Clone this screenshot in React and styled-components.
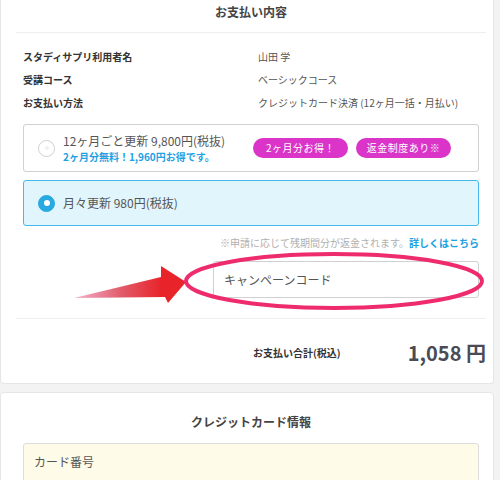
import React from 'react';
import styled, { createGlobalStyle } from 'styled-components';

const GlobalStyle = createGlobalStyle`
  html, body {
    margin: 0;
    padding: 0;
    background: #f3f3f3;
    font-family: "Noto Sans CJK JP", "Noto Sans", sans-serif;
    color: #333;
  }
`;

const Page = styled.div`
  width: 500px;
  height: 480px;
  overflow: hidden;
`;

const Card = styled.section`
  box-sizing: border-box;
  width: 494px;
  background: #fff;
  border: 1px solid #e6e6e6;
  border-top: ${p => (p.$cut ? 'none' : '1px solid #e6e6e6')};
  border-radius: ${p => (p.$cut ? '0 0 4px 4px' : '4px 4px 0 0')};
  padding: 0 7px 0 15px;
  margin-bottom: 8px;
`;

const CardTitle = styled.h2`
  margin: 0;
  line-height: 24px;
  padding-top: ${p => p.$top || 0}px;
  font-size: 12px;
  font-weight: 700;
  color: #444;
  text-align: center;
  border-bottom: ${p => (p.$line ? '1px solid #eee' : 'none')};
  box-sizing: ${p => (p.$line ? 'border-box' : 'content-box')};
  height: ${p => (p.$line ? '33px' : '24px')};
`;

const Inner = styled.div`
  padding: 0 7px;
`;

const InfoList = styled.dl`
  margin: 0;
  padding-top: 12px;
`;

const InfoRow = styled.div`
  display: grid;
  grid-template-columns: 235px 1fr;
  line-height: 23px;
  font-size: 10px;
`;

const InfoLabel = styled.dt`
  font-weight: 700;
  color: #333;
`;

const InfoValue = styled.dd`
  margin: 0;
  color: #555;
`;

const OptionList = styled.div`
  display: flex;
  flex-direction: column;
  gap: 8px;
  margin-top: 10px;
`;

const Option = styled.label`
  box-sizing: border-box;
  display: flex;
  align-items: center;
  height: ${p => (p.$selected ? 46 : 48)}px;
  padding: 0 27px 0 14px;
  border: 1px solid ${p => (p.$selected ? '#45b9ec' : '#cfcfd4')};
  border-radius: 3px;
  background: ${p => (p.$selected ? '#e1f5fd' : '#fff')};
`;

const Radio = styled.span`
  box-sizing: border-box;
  flex: none;
  width: 17px;
  height: 17px;
  margin-right: 8px;
  border-radius: 50%;
  display: flex;
  align-items: center;
  justify-content: center;
  background: ${p => (p.$selected ? '#27a9e1' : '#fff')};
  border: 1px solid ${p => (p.$selected ? '#27a9e1' : '#cfcfd4')};
  &::after {
    content: '';
    width: ${p => (p.$selected ? 6 : 4)}px;
    height: ${p => (p.$selected ? 6 : 4)}px;
    border-radius: 50%;
    background: ${p => (p.$selected ? '#fff' : '#f0f0f0')};
  }
`;

const OptionText = styled.div`
  flex: 1;
  display: flex;
  flex-direction: column;
`;

const OptionMain = styled.span`
  font-size: 12px;
  line-height: 18px;
  color: #555;
`;

const OptionSub = styled.span`
  font-size: 10px;
  line-height: 14px;
  font-weight: 700;
  color: #1da1e2;
`;

const Badges = styled.div`
  display: flex;
  gap: 8px;
`;

const Badge = styled.span`
  width: 95px;
  height: 20px;
  border-radius: 10px;
  background: #da34c9;
  color: #fff;
  font-size: 10px;
  line-height: 20px;
  text-align: center;
  letter-spacing: 0.5px;
`;

const Note = styled.p`
  margin: 9px 0 0;
  font-size: 10px;
  line-height: 16px;
  text-align: right;
  color: #b0b0b0;
`;

const NoteLink = styled.a`
  color: #1da1e2;
  font-weight: 700;
  text-decoration: none;
`;

const CampaignRow = styled.div`
  position: relative;
  display: flex;
  justify-content: flex-end;
  margin-top: 10px;
`;

const CampaignInput = styled.input`
  box-sizing: border-box;
  width: 266px;
  height: 37px;
  padding: 0 10px;
  border: 1px solid #cfcfd4;
  border-radius: 3px;
  background: #fff;
  font-family: "Noto Sans CJK JP", sans-serif;
  font-size: 12px;
  outline: none;
  &::placeholder {
    color: #555;
  }
`;

const Annotation = styled.svg`
  position: absolute;
  left: 38px;
  top: -11px;
  pointer-events: none;
`;

const Divider = styled.hr`
  margin: 20px 0 0;
  border: none;
  border-top: 1px solid #eee;
`;

const TotalRow = styled.div`
  display: flex;
  align-items: center;
  height: 64px;
  padding: 2px 0 0 237px;
  box-sizing: border-box;
`;

const TotalLabel = styled.span`
  font-size: 10px;
  font-weight: 700;
  color: #333;
`;

const TotalAmount = styled.span`
  margin-left: auto;
  font-size: 20px;
  font-weight: 700;
  color: #4a4b57;
`;

const FormBox = styled.div`
  margin-top: 9px;
  border: 1px solid #dcdcdc;
  border-radius: 3px;
  background: #fefbe8;
  padding: 8px 10px 0;
  height: 60px;
`;

const FieldLabel = styled.div`
  font-size: 12px;
  line-height: 20px;
  color: #555;
`;

const DarkField = styled.div`
  margin: 8px -12px 0 10px;
  height: 20px;
  background: #2e2e30;
`;

export default function App() {
  return (
    <Page>
      <GlobalStyle />
      <Card $cut>
        <CardTitle $line>お支払い内容</CardTitle>
        <Inner>
          <InfoList>
            <InfoRow>
              <InfoLabel>スタディサプリ利用者名</InfoLabel>
              <InfoValue>山田 学</InfoValue>
            </InfoRow>
            <InfoRow>
              <InfoLabel>受講コース</InfoLabel>
              <InfoValue>ベーシックコース</InfoValue>
            </InfoRow>
            <InfoRow>
              <InfoLabel>お支払い方法</InfoLabel>
              <InfoValue>クレジットカード決済 (12ヶ月一括・月払い)</InfoValue>
            </InfoRow>
          </InfoList>

          <OptionList>
            <Option>
              <Radio />
              <OptionText>
                <OptionMain>12ヶ月ごと更新 9,800円(税抜)</OptionMain>
                <OptionSub>2ヶ月分無料！1,960円お得です。</OptionSub>
              </OptionText>
              <Badges>
                <Badge>2ヶ月分お得！</Badge>
                <Badge>返金制度あり※</Badge>
              </Badges>
            </Option>
            <Option $selected>
              <Radio $selected />
              <OptionText>
                <OptionMain>月々更新 980円(税抜)</OptionMain>
              </OptionText>
            </Option>
          </OptionList>

          <Note>
            ※申請に応じて残期間分が返金されます。<NoteLink href="#">詳しくはこちら</NoteLink>
          </Note>

          <CampaignRow>
            <CampaignInput placeholder="キャンペーンコード" />
            <Annotation width="435" height="65" viewBox="0 0 435 65">
              <defs>
                <linearGradient id="arrowFade" x1="13" y1="0" x2="100" y2="0" gradientUnits="userSpaceOnUse">
                  <stop offset="0" stopColor="#f2b3cf" />
                  <stop offset="0.55" stopColor="#e25a6a" />
                  <stop offset="1" stopColor="#e8242a" />
                </linearGradient>
              </defs>
              <polygon
                points="13,48 100,27 100,16 125,32 107,53 104,47"
                fill="url(#arrowFade)"
              />
              <ellipse cx="273" cy="31" rx="148" ry="27" fill="none" stroke="#ee2c6d" strokeWidth="4" />
            </Annotation>
          </CampaignRow>
        </Inner>

        <Divider />
        <TotalRow>
          <TotalLabel>お支払い合計(税込)</TotalLabel>
          <TotalAmount>1,058 円</TotalAmount>
        </TotalRow>
      </Card>

      <Card>
        <CardTitle $top={17}>クレジットカード情報</CardTitle>
        <Inner>
          <FormBox>
            <FieldLabel>カード番号</FieldLabel>
            <DarkField />
          </FormBox>
        </Inner>
      </Card>
    </Page>
  );
}
